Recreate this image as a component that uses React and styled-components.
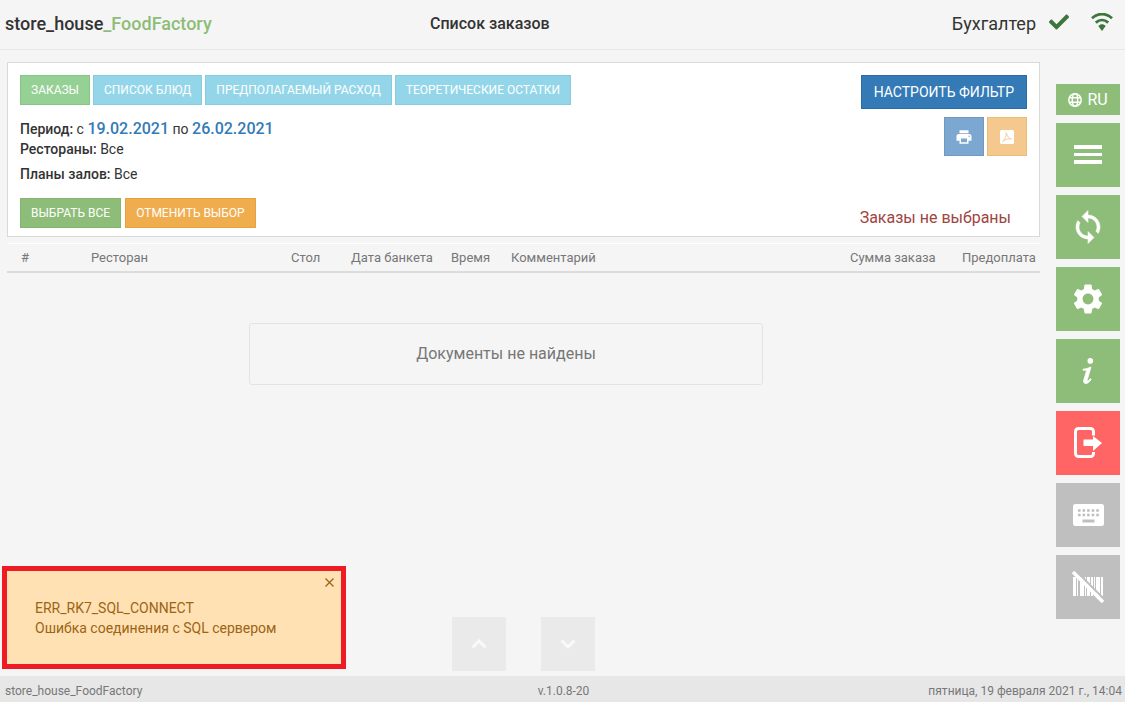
import React from "react";
import styled, { createGlobalStyle } from "styled-components";
import { FaCheck } from "react-icons/fa";
import { MdSettings, MdPrint } from "react-icons/md";

const GlobalStyle = createGlobalStyle`
  *, *::before, *::after { box-sizing: border-box; }
  body {
    margin: 0;
    background: #f5f5f5;
    color: #333;
    font: 14px/20px Roboto, "Liberation Sans", sans-serif;
  }
  button { font-family: inherit; cursor: pointer; }
`;

const Page = styled.div`
  position: relative;
  display: flex;
  flex-direction: column;
  min-height: 100vh;
`;

const Header = styled.header`
  display: grid;
  grid-template-columns: 38% 1fr auto;
  column-gap: 4px;
  align-items: center;
  height: 50px;
  padding: 0 12px 2px 5px;
  border-bottom: 1px solid #e7e7e7;
`;

const Brand = styled.div`
  font-size: 18px;
  font-weight: 500;
  span { color: #8dbd78; }
`;

const Title = styled.h1`
  margin: 0;
  font-size: 16px;
  font-weight: 500;
`;

const User = styled.div`
  display: flex;
  align-items: center;
  gap: 13px;
  font-size: 18px;
  color: #3c763d;
  span { color: #333; }
  svg { margin-bottom: 4px; }
  svg + svg { margin-left: 9px; }
`;

const Body = styled.div`
  display: flex;
  flex: 1;
  gap: 16px;
  padding: 12px 5px 5px 7px;
`;

const Main = styled.main`
  display: flex;
  flex: 1;
  flex-direction: column;
  min-width: 0;
`;

const Panel = styled.section`
  display: flex;
  justify-content: space-between;
  padding: 12px 12px 8px;
  background: #fff;
  border: 1px solid #d9d9d9;
`;

const PanelSide = styled.div`
  display: flex;
  flex-direction: column;
  align-items: flex-end;
  gap: 8px;
`;

const Row = styled.div`
  display: flex;
  gap: ${(p) => p.$gap || 3}px;
`;

const tones = {
  tabActive: ["#95d095", "#87c587"],
  tab: ["#94d6e9", "#87cbdf"],
  green: ["#8dbd78", "#84b56f"],
  orange: ["#f0ad4e", "#e5a142"],
  blue: ["#337ab7", "#2e6da4"],
  softBlue: ["#7ca7d1", "#7199c1"],
  softOrange: ["#f5c98d", "#e9bc7c"],
};

const Button = styled.button`
  height: ${(p) => (p.$large ? 34 : 30)}px;
  padding: 0 ${(p) => (p.$large ? 12 : 10)}px;
  color: #fff;
  font-size: ${(p) => (p.$large ? 14 : 12)}px;
  font-weight: 400;
  white-space: nowrap;
  background: ${(p) => tones[p.$tone][0]};
  border: 1px solid ${(p) => tones[p.$tone][1]};
`;

const IconButton = styled(Button)`
  display: flex;
  align-items: center;
  justify-content: center;
  width: 40px;
  height: 39px;
  padding: 0;
`;

const Filters = styled.div`
  margin: 14px 0;
  p { margin: 0; }
  p:last-child { margin-top: 5px; }
  b { font-weight: 500; }
  a {
    color: #337ab7;
    font-size: 16px;
    font-weight: 500;
    text-decoration: none;
  }
`;

const Selection = styled.div`
  margin: auto 16px 0 0;
  color: #a04442;
  font-size: 16px;
`;

const Orders = styled.table`
  width: 100%;
  margin-top: 6px;
  table-layout: fixed;
  border-collapse: collapse;
  border-top: 1px solid #fff;
  border-bottom: 2px solid #dcdcdc;
  th {
    height: 28px;
    padding: 2px 0 0 14px;
    color: #777;
    font-size: 13px;
    font-weight: 400;
    text-align: left;
    white-space: nowrap;
  }
`;

const EmptyArea = styled.div`
  display: flex;
  justify-content: center;
  padding: 50px 35px 50px 0;
`;

const Empty = styled.div`
  width: 100%;
  max-width: 514px;
  padding: 20px;
  color: #777;
  font-size: 16px;
  text-align: center;
  border: 1px solid #e3e3e3;
  border-radius: 3px;
`;

const Pager = styled.div`
  display: flex;
  justify-content: center;
  gap: 35px;
  margin-top: auto;
`;

const PageButton = styled.button`
  display: flex;
  align-items: center;
  justify-content: center;
  width: 54px;
  height: 54px;
  padding: 0;
  background: #eaeaea;
  border: 0;
`;

const Tools = styled.nav`
  display: flex;
  flex-direction: column;
  gap: 8px;
  width: 64px;
  padding-top: 22px;
`;

const Tool = styled.button`
  display: flex;
  align-items: center;
  justify-content: center;
  gap: 5px;
  height: ${(p) => (p.$short ? 31 : 64)}px;
  padding: 0;
  color: #fff;
  font-size: 16px;
  background: ${(p) => p.$color || "#8dbd78"};
  border: 0;
`;

const Footer = styled.footer`
  display: grid;
  grid-template-columns: 1fr auto 1fr;
  align-items: center;
  height: 26px;
  padding: 3px 3px 0 5px;
  color: #777;
  font-size: 12px;
  background: #e7e7e7;
  span:last-child { text-align: right; }
`;

const Toast = styled.div`
  position: absolute;
  bottom: 33px;
  left: 2px;
  width: 344px;
  padding: 27px 28px 26px;
  color: #9c6415;
  background: #ffe1b3;
  border: 5px solid #ed1c24;
  p { margin: 0; }
`;

const Close = styled.button`
  position: absolute;
  top: 7px;
  right: 7px;
  display: flex;
  padding: 0;
  color: inherit;
  background: none;
  border: 0;
`;

const WifiIcon = () => (
  <svg width="22" height="18" viewBox="0 0 22 18" fill="none" stroke="currentColor" strokeWidth="2.8">
    <path d="M1 5.2C7-.3 15-.3 21 5.2" />
    <path d="M4.8 9.600c3.700-3.300 8.700-3.300 12.400 0" />
    <path d="M7.300 13c2.300-2.400 5.100-2.400 7.400 0L11 18z" fill="currentColor" stroke="none" />
  </svg>
);

const GlobeIcon = () => (
  <svg width="14" height="14" viewBox="0 0 14 14" fill="none" stroke="currentColor" strokeWidth="1.500">
    <circle cx="7" cy="7" r="6.200" />
    <ellipse cx="7" cy="7" rx="2.700" ry="6.200" />
    <path d="M1.200 4.800h11.600M1.200 9.200h11.600" />
  </svg>
);

const SyncIcon = () => (
  <svg width="36" height="36" viewBox="0 0 24 24" fill="currentColor" stroke="currentColor" strokeWidth=".35">
    <path d="M12 4V1L8 5l4 4V6c3.310 0 6 2.690 6 6 0 1.010-.25 1.970-.7 2.800l1.460 1.460C19.540 15.030 20 13.570 20 12c0-4.420-3.580-8-8-8zm0 14c-3.310 0-6-2.690-6-6 0-1.010.25-1.970.7-2.800L5.240 7.740C4.460 8.970 4 10.430 4 12c0 4.420 3.580 8 8 8v3l4-4-4-4v3z" />
  </svg>
);

const PdfIcon = () => (
  <svg width="14" height="14" viewBox="0 0 14 14">
    <rect width="14" height="14" rx="1.500" fill="#fff" />
    <path d="M2.500 11.500C4.800 9.800 6.500 6 6.300 2.800c1 3.500 2.400 5.600 5.200 6.300-2.800-.8-5.500-.3-9 2.400z" fill="none" stroke="#f5c08a" strokeWidth=".8" />
  </svg>
);

const MenuIcon = () => (
  <svg width="28" height="20" viewBox="0 0 28 20" fill="currentColor">
    <path d="M0 0h28v4H0zM0 8h28v3H0zM0 15h28v4H0z" />
  </svg>
);

const InfoIcon = () => (
  <svg width="12" height="26" viewBox="0 0 12 26" fill="currentColor">
    <circle cx="8.300" cy="2.900" r="2.800" />
    <path d="M1 11.200C4 11 6.300 10 9 9L5.300 21.800c-.4 1.500.3 1.700 1.200.8l1.800-2 .9.700C7.300 24.300 5.600 25.500 3.900 25.500c-2 0-2.700-1.400-2.200-3.300L4.300 13.500c.3-1-.1-1.300-1-1.300H1z" stroke="currentColor" strokeWidth=".8" />
  </svg>
);

const ExitIcon = () => (
  <svg width="28" height="32" viewBox="0 0 28 32">
    <path d="M19.500 8.500V4.500a3 3 0 0 0-3-3h-12a3 3 0 0 0-3 3v22a3 3 0 0 0 3 3h12a3 3 0 0 0 3-3V25" fill="none" stroke="currentColor" strokeWidth="3" />
    <path d="M9.500 12.500h9.500V9l9 7-9 8v-5H9.500z" fill="currentColor" />
  </svg>
);

const KeyboardIcon = () => (
  <svg width="31" height="22" viewBox="0 0 31 22">
    <rect width="31" height="22" rx="2.500" fill="#fff" />
    <path d="M5 6.500h22M5 11h22" stroke="#bfbfbf" strokeWidth="2.600" strokeDasharray="2.600 1.950" />
    <path d="M9.500 17h12" stroke="#bfbfbf" strokeWidth="3" />
  </svg>
);

const BarcodeIcon = () => (
  <svg width="32" height="32" viewBox="0 0 32 32">
    <path d="M1 6h3v19H1zM5 6h1v19H5zM8 6h4v19H8zM13 6h1v19h-1zM15 6h3v19h-3zM19 6h2v19h-2zM22 6h1v19h-1zM24 6h4v19h-4zM29 6h2v19h-2z" fill="#fff" />
    <path d="M3.500-.5l30 30" stroke="#bfbfbf" strokeWidth="2" />
    <path d="M1 1l30 30" stroke="#fff" strokeWidth="3.500" />
  </svg>
);

const Chevron = ({ down }) => (
  <svg width="16" height="10" viewBox="0 0 16 10" fill="none" stroke="#f9f9f9" strokeWidth="3">
    <path d={down ? "M1.500 1.500L8 8l6.500-6.500" : "M1.500 8.500L8 2l6.500 6.500"} />
  </svg>
);

const CloseIcon = () => (
  <svg width="9" height="9" viewBox="0 0 9 9" stroke="currentColor" strokeWidth="1.300">
    <path d="M.5.5l8 8M8.500.5l-8 8" />
  </svg>
);

const columns = [
  ["#", 70],
  ["Ресторан", 200],
  ["Стол", 60],
  ["Дата банкета", 100],
  ["Время", 60],
  ["Комментарий"],
  ["Сумма заказа", 112],
  ["Предоплата", 92],
];

export default function App() {
  return (
    <Page>
      <GlobalStyle />
      <Header>
        <Brand>store_house<span>_FoodFactory</span></Brand>
        <Title>Список заказов</Title>
        <User>
          <span>Бухгалтер</span>
          <FaCheck size={20} />
          <WifiIcon />
        </User>
      </Header>
      <Body>
        <Main>
          <Panel>
            <div>
              <Row>
                <Button $tone="tabActive">ЗАКАЗЫ</Button>
                <Button $tone="tab">СПИСОК БЛЮД</Button>
                <Button $tone="tab">ПРЕДПОЛАГАЕМЫЙ РАСХОД</Button>
                <Button $tone="tab">ТЕОРЕТИЧЕСКИЕ ОСТАТКИ</Button>
              </Row>
              <Filters>
                <p><b>Период:</b> с <a href="#from">19.02.2021</a> по <a href="#to">26.02.2021</a></p>
                <p><b>Рестораны:</b> Все</p>
                <p><b>Планы залов:</b> Все</p>
              </Filters>
              <Row $gap={4}>
                <Button $tone="green">ВЫБРАТЬ ВСЕ</Button>
                <Button $tone="orange">ОТМЕНИТЬ ВЫБОР</Button>
              </Row>
            </div>
            <PanelSide>
              <Button $tone="blue" $large>НАСТРОИТЬ ФИЛЬТР</Button>
              <Row>
                <IconButton $tone="softBlue" aria-label="Печать"><MdPrint size={18} /></IconButton>
                <IconButton $tone="softOrange" aria-label="PDF"><PdfIcon /></IconButton>
              </Row>
              <Selection>Заказы не выбраны</Selection>
            </PanelSide>
          </Panel>
          <Orders>
            <colgroup>
              {columns.map(([name, width]) => <col key={name} width={width} />)}
            </colgroup>
            <thead>
              <tr>{columns.map(([name]) => <th key={name} scope="col">{name}</th>)}</tr>
            </thead>
          </Orders>
          <EmptyArea><Empty>Документы не найдены</Empty></EmptyArea>
          <Pager>
            <PageButton aria-label="Вверх"><Chevron /></PageButton>
            <PageButton aria-label="Вниз"><Chevron down /></PageButton>
          </Pager>
        </Main>
        <Tools>
          <Tool $short><GlobeIcon />RU</Tool>
          <Tool aria-label="Меню"><MenuIcon /></Tool>
          <Tool aria-label="Обновить"><SyncIcon /></Tool>
          <Tool aria-label="Настройки"><MdSettings size={36} /></Tool>
          <Tool aria-label="Информация"><InfoIcon /></Tool>
          <Tool aria-label="Выход" $color="#ff6565"><ExitIcon /></Tool>
          <Tool aria-label="Клавиатура" $color="#bfbfbf"><KeyboardIcon /></Tool>
          <Tool aria-label="Сканер" $color="#bfbfbf"><BarcodeIcon /></Tool>
        </Tools>
      </Body>
      <Footer>
        <span>store_house_FoodFactory</span>
        <span>v.1.0.8-20</span>
        <span>пятница, 19 февраля 2021 г., 14:04</span>
      </Footer>
      <Toast role="alert">
        <Close aria-label="Закрыть"><CloseIcon /></Close>
        <p>ERR_RK7_SQL_CONNECT</p>
        <p>Ошибка соединения с SQL сервером</p>
      </Toast>
    </Page>
  );
}
